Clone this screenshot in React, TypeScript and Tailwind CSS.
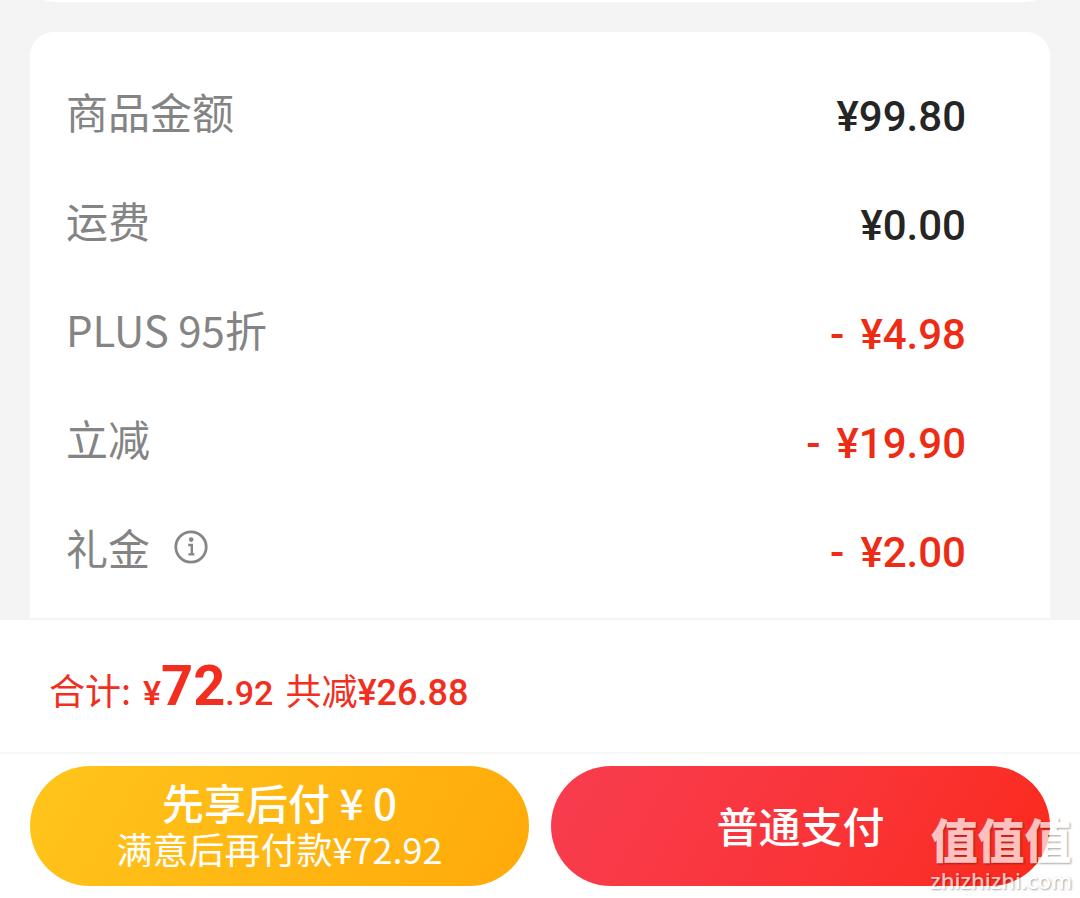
import React from "react";

interface PriceRow {
  id: string;
  label: string;
  amount: string;
  discount?: boolean;
  hasInfo?: boolean;
}

const rows: PriceRow[] = [
  { id: "goods", label: "商品金额", amount: "¥99.80" },
  { id: "shipping", label: "运费", amount: "¥0.00" },
  { id: "plus", label: "PLUS 95折", amount: "¥4.98", discount: true },
  { id: "instant", label: "立减", amount: "¥19.90", discount: true },
  { id: "gift", label: "礼金", amount: "¥2.00", discount: true, hasInfo: true },
];

const InfoIcon = () => (
  <svg viewBox="0 0 34 34" className="size-[34px]" fill="none" aria-hidden="true">
    <circle cx="17" cy="17" r="15.2" stroke="#868686" strokeWidth="2.8" />
    <circle cx="17.2" cy="9.6" r="2.3" fill="#868686" />
    <path d="M14.2 15h3.6v8.6M14.4 24.4h6" stroke="#868686" strokeWidth="2.4" />
  </svg>
);

const Row = ({ label, amount, discount, hasInfo }: PriceRow) => (
  <div className="flex h-[109px] items-center justify-between">
    <dt className="flex items-center gap-6 pb-2 text-[42px] leading-[60px] text-[#848484]">
      {label}
      {hasInfo && (
        <button type="button" aria-label="礼金说明" className="cursor-pointer">
          <InfoIcon />
        </button>
      )}
    </dt>
    <dd
      className={`flex gap-4 pt-1 font-['Roboto','Noto_Sans_CJK_SC',sans-serif] text-[42px] leading-[60px] font-medium ${
        discount ? "text-[#ee2c15]" : "text-[#252525]"
      }`}
    >
      {discount && <span>-</span>}
      <span>{amount}</span>
    </dd>
  </div>
);

const Watermark = () => (
  <div className="pointer-events-none absolute right-2 bottom-1 flex flex-col items-center text-white opacity-70 [text-shadow:1px_1px_2px_rgba(0,0,0,0.5)]">
    <span className="text-[47px] leading-[56px] font-black">值值值</span>
    <span className="font-['Noto_Sans',sans-serif] text-[22px] leading-7 font-medium">zhizhizhi.com</span>
  </div>
);

export default function App() {
  return (
    <div className="relative flex min-h-screen flex-col bg-[#f4f4f4] font-['Noto_Sans_CJK_SC',sans-serif]">
      <main className="flex flex-1 flex-col overflow-hidden px-[30px]">
        {/* tail of the card scrolled off the top */}
        <div className="-mt-[46px] h-12 shrink-0 rounded-3xl bg-white" />
        <dl className="mt-[30px] flex-1 rounded-t-3xl bg-white pt-7 pr-[84px] pb-3 pl-9">
          {rows.map((row) => (
            <Row key={row.id} {...row} />
          ))}
        </dl>
      </main>

      <footer className="border-t-2 border-[#f4f4f4] bg-white">
        <div className="flex h-[134px] items-baseline border-b-2 border-[#f6f6f6] pt-7 pl-[49px] text-[36px] text-[#f22e1e]">
          <span>合计:</span>
          <span className="ml-3 font-['Roboto','Noto_Sans_CJK_SC',sans-serif] text-[34px] font-medium">
            ¥<span className="text-[56px] leading-[76px] font-bold">72</span>.92
          </span>
          <span className="ml-3">
            共减
            <span className="font-['Roboto','Noto_Sans_CJK_SC',sans-serif] font-medium">¥26.88</span>
          </span>
        </div>

        <div className="grid grid-cols-2 gap-[22px] px-[30px] py-3 text-white">
          <button
            type="button"
            className="flex h-[120px] cursor-pointer flex-col items-center justify-center rounded-full bg-linear-120 from-[#ffc51b] to-[#ffaa08] pb-1"
          >
            <span className="text-[42px] leading-[48px] font-medium">先享后付 ¥ 0</span>
            <span className="text-[36px] leading-[44px]">满意后再付款¥72.92</span>
          </button>
          <button
            type="button"
            className="h-[120px] cursor-pointer rounded-full bg-linear-120 from-[#f83d50] to-[#fb2a18] pb-1 text-[42px] font-medium"
          >
            普通支付
          </button>
        </div>
      </footer>

      <Watermark />
    </div>
  );
}
